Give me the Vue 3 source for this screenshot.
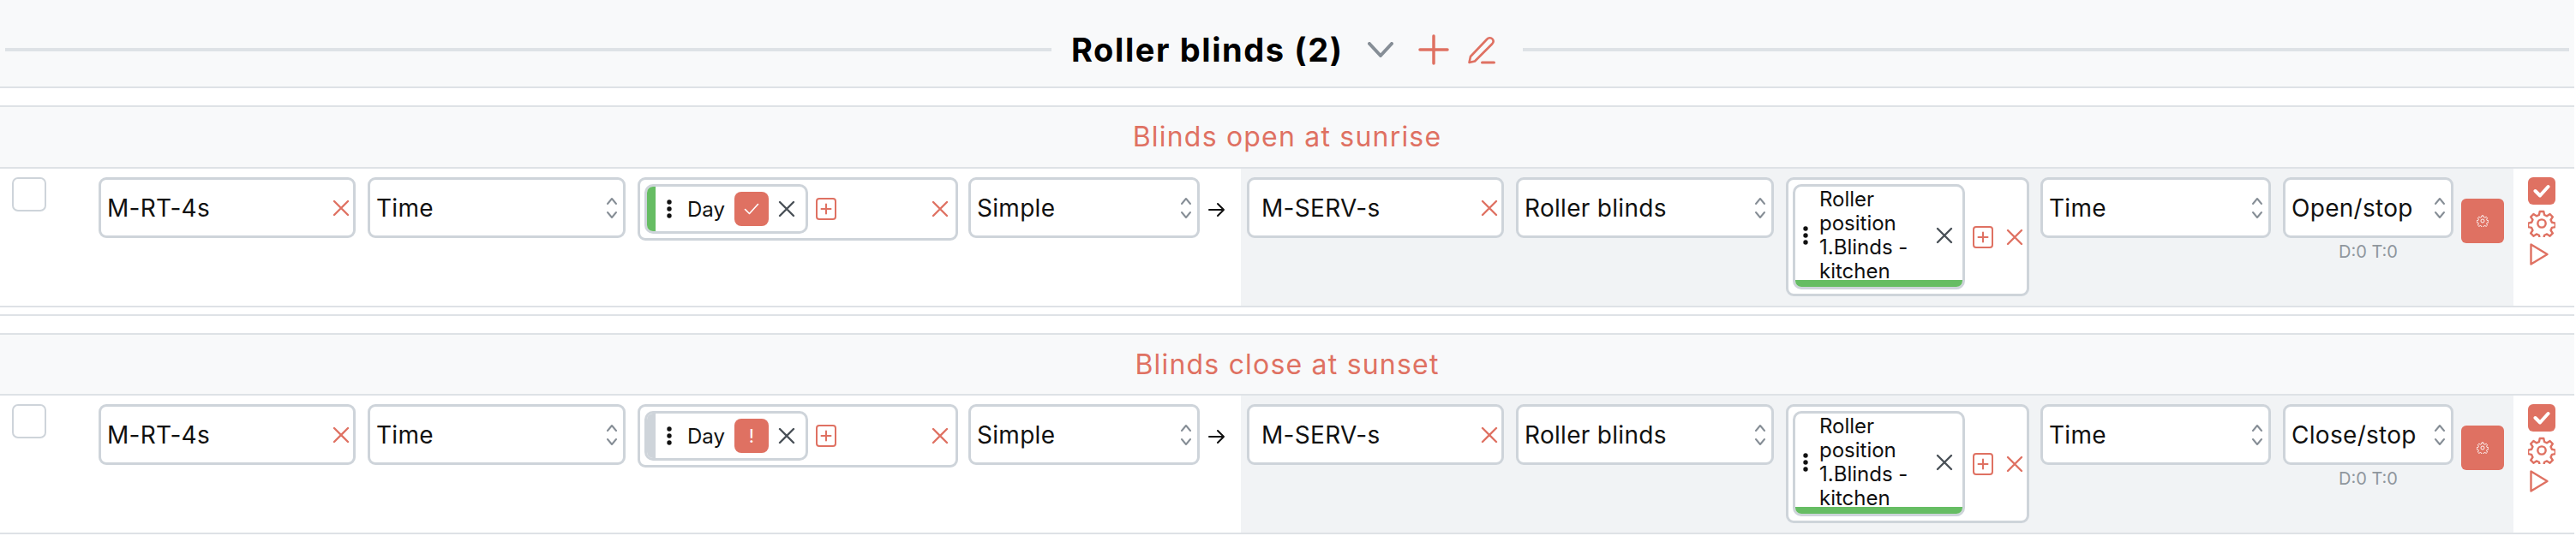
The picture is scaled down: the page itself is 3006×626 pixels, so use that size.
<template>
  <div class="page">
    <!-- Group header -->
    <div class="group-head">
      <div class="rule"></div>
      <div class="group-title">
        <span class="title-text">Roller blinds (2)</span>
        <svg class="chevron" viewBox="0 0 30 18" fill="none" stroke="#868e96" stroke-width="4" stroke-linecap="round" stroke-linejoin="round">
          <path d="M2 2l13 14L28 2" />
        </svg>
        <svg class="add" viewBox="0 0 36 36" fill="none" stroke="#df7162" stroke-width="3.5" stroke-linecap="round">
          <path d="M18 2v32M2 18h32" />
        </svg>
        <svg class="pencil" viewBox="0 0 32 32" fill="none" stroke="#df7162" stroke-width="2.600" stroke-linecap="round" stroke-linejoin="round">
          <path d="M1.500 30.500l1.500-7L22 3.500c2-2.200 5-2.200 6.500-.5s1.500 4-.5 6L8 29z" />
          <path d="M16.500 30.500h14" stroke-width="3" />
        </svg>
      </div>
      <div class="rule"></div>
    </div>

    <section v-for="rule in rules" :key="rule.title" class="scene">
      <div class="scene-title">{{ rule.title }}</div>
      <div class="scene-row">
        <!-- Trigger side -->
        <div class="side trigger">
          <span class="check"></span>
          <div class="field w300 first">
            <span>M-RT-4s</span>
            <svg class="x red" viewBox="0 0 20 20"><path d="M2 2l16 16M18 2L2 18" /></svg>
          </div>
          <div class="field w301">
            <span>Time</span>
            <svg class="updown" viewBox="0 0 14 30"><path d="M2 10l5-6 5 6M2 20l5 6 5-6" /></svg>
          </div>
          <div class="multi day-multi">
            <div class="chip day">
              <i class="stripe" :class="rule.on ? 'green' : 'grey'"></i>
              <svg class="dots" viewBox="0 0 6 22"><circle cx="3" cy="3" r="2.700" /><circle cx="3" cy="11" r="2.700" /><circle cx="3" cy="19" r="2.700" /></svg>
              <span class="chip-name">Day</span>
              <span class="state">
                <svg v-if="rule.on" viewBox="0 0 18 14" fill="none" stroke="#fff" stroke-width="1.600" stroke-linecap="round" stroke-linejoin="round"><path d="M1.500 7.500l5 5 10-11" /></svg>
                <span v-else class="bang">!</span>
              </span>
              <svg class="x dark" viewBox="0 0 20 20"><path d="M2 2l16 16M18 2L2 18" /></svg>
            </div>
            <svg class="plus-box" viewBox="0 0 24 26"><rect x="1" y="1" width="22" height="24" rx="3" /><path d="M12 7.500v11M6.500 13h11" /></svg>
            <svg class="x red push" viewBox="0 0 20 20"><path d="M2 2l16 16M18 2L2 18" /></svg>
          </div>
          <div class="field w270">
            <span>Simple</span>
            <svg class="updown" viewBox="0 0 14 30"><path d="M2 10l5-6 5 6M2 20l5 6 5-6" /></svg>
          </div>
          <svg class="arrow" viewBox="0 0 20 20" fill="none" stroke="#111" stroke-width="2" stroke-linecap="round" stroke-linejoin="round"><path d="M1 10h17M11 3l7 7-7 7" /></svg>
        </div>

        <!-- Action side -->
        <div class="side action">
          <div class="field w300 serv">
            <span>M-SERV-s</span>
            <svg class="x red" viewBox="0 0 20 20"><path d="M2 2l16 16M18 2L2 18" /></svg>
          </div>
          <div class="field w301">
            <span>Roller blinds</span>
            <svg class="updown" viewBox="0 0 14 30"><path d="M2 10l5-6 5 6M2 20l5 6 5-6" /></svg>
          </div>
          <div class="multi pos-multi">
            <div class="chip pos">
              <svg class="dots" viewBox="0 0 6 22"><circle cx="3" cy="3" r="2.700" /><circle cx="3" cy="11" r="2.700" /><circle cx="3" cy="19" r="2.700" /></svg>
              <span class="chip-name long">Roller position 1.Blinds - kitchen</span>
              <svg class="x dark" viewBox="0 0 20 20"><path d="M2 2l16 16M18 2L2 18" /></svg>
              <i class="stripe-bottom"></i>
            </div>
            <svg class="plus-box" viewBox="0 0 24 26"><rect x="1" y="1" width="22" height="24" rx="3" /><path d="M12 7.500v11M6.500 13h11" /></svg>
            <svg class="x red" viewBox="0 0 20 20"><path d="M2 2l16 16M18 2L2 18" /></svg>
          </div>
          <div class="field w269">
            <span>Time</span>
            <svg class="updown" viewBox="0 0 14 30"><path d="M2 10l5-6 5 6M2 20l5 6 5-6" /></svg>
          </div>
          <div class="stack">
            <div class="field w199">
              <span>{{ rule.action }}</span>
              <svg class="updown" viewBox="0 0 14 30"><path d="M2 10l5-6 5 6M2 20l5 6 5-6" /></svg>
            </div>
            <div class="counter">D:0 T:0</div>
          </div>
          <button type="button" class="gear-btn">
            <svg viewBox="0 0 24 24" fill="none" stroke="#fff" stroke-width="1.600" stroke-linejoin="round">
              <path :d="gearPath" />
              <circle cx="12" cy="12" r="3.500" />
            </svg>
          </button>
        </div>

        <!-- Row tools -->
        <div class="tools">
          <span class="tool-check">
            <svg viewBox="0 0 20 16" fill="none" stroke="#fff" stroke-width="4" stroke-linecap="round" stroke-linejoin="round"><path d="M2.500 8l5.500 5.500L17.500 3" /></svg>
          </span>
          <svg class="tool-gear" viewBox="0 0 24 24" fill="none" stroke="#df7162" stroke-width="1.800" stroke-linejoin="round">
            <path :d="gearPath" />
            <circle cx="12" cy="12" r="3.500" />
          </svg>
          <svg class="tool-play" viewBox="0 0 22 26" fill="none" stroke="#df7162" stroke-width="2.400" stroke-linejoin="round"><path d="M1.500 1.500v23L20.500 13z" /></svg>
        </div>
      </div>
    </section>
  </div>
</template>

<script setup>
const rules = [
  { title: 'Blinds open at sunrise', action: 'Open/stop', on: true },
  { title: 'Blinds close at sunset', action: 'Close/stop', on: false }
]

// gear outline with eight teeth
const gearPath = 'M10.300 1.500h3.400l.6 3 2.300 1 2.600-1.700 2.400 2.400-1.700 2.600 1 2.300 3 .6v3.400l-3 .6-1 2.300 1.700 2.600-2.400 2.400-2.600-1.700-2.300 1-.6 3h-3.400l-.6-3-2.300-1-2.600 1.700-2.400-2.400 1.700-2.600-1-2.300-3-.6v-3.400l3-.6 1-2.300-1.700-2.600 2.400-2.400 2.600 1.700 2.300-1z'
</script>

<style>
html,
body {
  background: #fff;
}
</style>

<style scoped>
.page {
  width: 3004px;
  font-family: Inter, "Liberation Sans", sans-serif;
  color: #111;
}

.group-head {
  height: 101px;
  display: flex;
  align-items: center;
  padding: 0 6px;
  box-sizing: content-box;
  background: #f8f9fa;
  border-bottom: 2px solid #dee2e6;
  margin-bottom: 20px;
}

.rule {
  flex: 1;
  height: 4px;
  margin-top: 15px;
  background: #dee2e6;
}

.group-title {
  display: flex;
  align-items: center;
  margin: 15px 32px 0 23px;
}

.title-text {
  width: 320px;
  font-size: 38px;
  font-weight: 700;
  letter-spacing: 1.600px;
  white-space: nowrap;
  color: #000;
}

.chevron {
  width: 30px;
  height: 18px;
  margin-left: 26px;
}

.add {
  width: 36px;
  height: 36px;
  margin-left: 29px;
}

.pencil {
  width: 32px;
  height: 33px;
  margin-left: 22px;
}

.scene {
  border-top: 2px solid #dee2e6;
}

.scene:not(:last-child) {
  margin-bottom: 20px;
}

.scene:not(:last-child)::after {
  content: "";
  display: block;
  height: 2px;
  margin-top: 8px;
  background: #dee2e6;
}

.scene-title {
  height: 70px;
  line-height: 70px;
  text-align: center;
  font-size: 32px;
  letter-spacing: 1.200px;
  color: #df7162;
  background: #f8f9fa;
  border-bottom: 2px solid #dee2e6;
}

.scene + .scene .scene-title {
  height: 69px;
  line-height: 69px;
}

.scene-row {
  display: flex;
  height: 160px;
  border-bottom: 2px solid #dee2e6;
}

.side {
  display: flex;
  align-items: flex-start;
  padding-top: 10px;
}

.trigger {
  width: 1448px;
  padding-left: 14px;
  box-sizing: border-box;
}

.action {
  width: 1485px;
  padding-left: 7px;
  box-sizing: border-box;
  background: #f1f3f5;
}

.check {
  flex: none;
  width: 40px;
  height: 40px;
  box-sizing: border-box;
  border: 2px solid #ced4da;
  border-radius: 7px;
  background: #fff;
}

.field {
  flex: none;
  height: 71px;
  box-sizing: border-box;
  display: flex;
  align-items: center;
  justify-content: space-between;
  padding: 0 6px 0 7px;
  margin-right: 14px;
  background: #fff;
  border: 3px solid #ced4da;
  border-radius: 9px;
  font-size: 28px;
  letter-spacing: 0.300px;
  white-space: nowrap;
}

.first {
  margin-left: 61px;
}

.serv {
  padding-left: 14px;
}

.field .x {
  margin-right: -2px;
}

.w300 { width: 300px; }
.w301 { width: 301px; }
.w270 { width: 270px; margin-right: 10px; }
.w269 { width: 269px; }
.w199 { width: 199px; margin-right: 0; }

.x {
  flex: none;
  width: 20px;
  height: 20px;
  fill: none;
  stroke-width: 2.400;
  stroke-linecap: round;
}

.x.red {
  stroke: #df7162;
}

.x.dark {
  stroke: #495057;
}

.updown {
  flex: none;
  width: 14px;
  height: 30px;
  fill: none;
  stroke: #868e96;
  stroke-width: 2;
  stroke-linecap: round;
  stroke-linejoin: round;
}

.multi {
  flex: none;
  display: flex;
  align-items: center;
  box-sizing: border-box;
  padding: 5px 8px 5px 5px;
  margin-right: 12px;
  background: #fff;
  border: 3px solid #ced4da;
  border-radius: 9px;
}

.day-multi {
  width: 374px;
  height: 74px;
}

.pos-multi {
  width: 284px;
  height: 139px;
  margin-right: 13px;
}

.chip {
  position: relative;
  flex: none;
  display: flex;
  align-items: center;
  box-sizing: border-box;
  background: #fff;
  border: 3px solid #ced4da;
  border-radius: 10px;
  overflow: hidden;
  font-size: 24px;
}

.chip.day {
  width: 191px;
  height: 58px;
}

.chip.pos {
  width: 201px;
  height: 123px;
  padding-bottom: 3px;
}

.stripe {
  align-self: stretch;
  flex: none;
  width: 10px;
}

.stripe.green {
  background: #66bd63;
}

.stripe.grey {
  width: 12px;
  margin-left: -2px;
  background: #ced4da;
}

.dots {
  flex: none;
  width: 6px;
  height: 22px;
  fill: #111;
}

.day .dots {
  margin-left: 13px;
}

.pos .dots {
  margin-left: 9px;
}

.chip-name {
  margin-left: 18px;
  white-space: nowrap;
}

.chip-name.long {
  width: 136px;
  margin-left: 13px;
  white-space: normal;
  line-height: 28px;
}

.state {
  flex: none;
  width: 40px;
  height: 40px;
  margin-left: 11px;
  display: flex;
  align-items: center;
  justify-content: center;
  background: #df7162;
  border-radius: 8px;
}

.state svg {
  width: 18px;
  height: 14px;
}

.bang {
  color: #fff;
  font-size: 22px;
}

.day .x {
  margin-left: 11px;
}

.pos .x {
  margin-left: 0;
}

.stripe-bottom {
  position: absolute;
  left: 0;
  right: 0;
  bottom: 0;
  height: 8px;
  background: #66bd63;
}

.plus-box {
  flex: none;
  width: 24px;
  height: 26px;
  margin-left: 9px;
  fill: none;
  stroke: #df7162;
  stroke-width: 2;
  stroke-linecap: round;
}

.pos-multi .x.red {
  margin-left: 15px;
}

.push {
  margin-left: auto;
}

.arrow {
  flex: none;
  width: 20px;
  height: 20px;
  margin-top: 28px;
}

.stack {
  flex: none;
  width: 199px;
}

.counter {
  margin-top: 4px;
  text-align: center;
  font-size: 20px;
  color: #8f969d;
}

.gear-btn {
  flex: none;
  width: 50px;
  height: 52px;
  margin: 25px 0 0 9px;
  padding: 0;
  display: flex;
  align-items: center;
  justify-content: center;
  background: #df7162;
  border: none;
  border-radius: 6px;
}

.gear-btn svg {
  width: 14px;
  height: 14px;
}

.tools {
  flex: 1;
  display: flex;
  flex-direction: column;
  align-items: center;
  padding: 10px 6px 0 0;
  background: #fff;
}

.tool-check {
  width: 32px;
  height: 32px;
  display: flex;
  align-items: center;
  justify-content: center;
  background: #df7162;
  border-radius: 6px;
}

.tool-check svg {
  width: 20px;
  height: 16px;
}

.tool-gear {
  width: 32px;
  height: 32px;
  margin-top: 6px;
}

.tool-play {
  width: 22px;
  height: 26px;
  margin-top: 7px;
  margin-right: 5px;
}
</style>
